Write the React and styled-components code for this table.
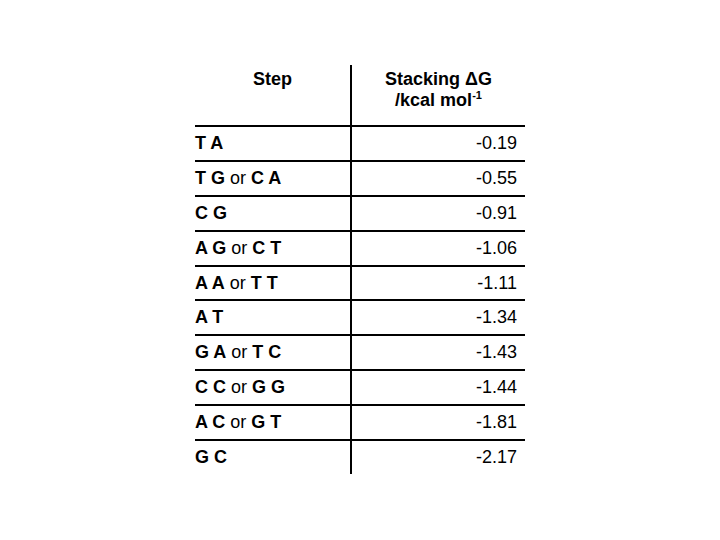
import React from 'react';
import styled, { createGlobalStyle } from 'styled-components';

const GlobalStyle = createGlobalStyle`
    html, body {
        margin: 0;
        padding: 0;
        background: #ffffff;
    }
    body {
        font-family: "Liberation Sans", Arial, sans-serif;
        color: #000000;
    }
`;

const Page = styled.div`
    width: 720px;
    height: 540px;
    padding: 65px 0 0 195px;
    box-sizing: border-box;
`;

const Table = styled.div`
    width: 330px;
    display: flex;
    flex-direction: column;
`;

const Row = styled.div`
    display: grid;
    grid-template-columns: 157px 1fr;
    height: ${(p) => p.$height}px;
    box-sizing: border-box;
    border-top: ${(p) => (p.$ruled ? '2px solid #000' : 'none')};
`;

const StepCell = styled.div`
    border-right: 2px solid #000;
    display: flex;
    align-items: ${(p) => (p.$head ? 'flex-start' : 'center')};
    justify-content: ${(p) => (p.$head ? 'center' : 'flex-start')};
    padding: ${(p) => (p.$head ? '4px 0 0 0' : '0')};
    font-size: 18px;
    line-height: 21px;
    font-weight: ${(p) => (p.$head ? 700 : 400)};
`;

const ValueCell = styled.div`
    display: flex;
    flex-direction: column;
    align-items: ${(p) => (p.$head ? 'center' : 'flex-end')};
    justify-content: ${(p) => (p.$head ? 'flex-start' : 'center')};
    padding: ${(p) => (p.$head ? '4px 0 0 0' : '0 8px 0 0')};
    font-size: 18px;
    line-height: 21px;
    font-weight: ${(p) => (p.$head ? 700 : 400)};
`;

const Base = styled.b`
    font-weight: 700;
`;

const Sup = styled.sup`
    font-size: 11px;
    line-height: 0;
    vertical-align: 7px;
`;

const steps = [
    [['T A'], '-0.19'],
    [['T G', 'C A'], '-0.55'],
    [['C G'], '-0.91'],
    [['A G', 'C T'], '-1.06'],
    [['A A', 'T T'], '-1.11'],
    [['A T'], '-1.34'],
    [['G A', 'T C'], '-1.43'],
    [['C C', 'G G'], '-1.44'],
    [['A C', 'G T'], '-1.81'],
    [['G C'], '-2.17'],
];

const App = () => {
    return (
        <Page>
            <GlobalStyle />
            <Table>
                <Row $height={60}>
                    <StepCell $head>Step</StepCell>
                    <ValueCell $head>
                        <span>Stacking ΔG</span>
                        <span>/kcal mol<Sup>-1</Sup></span>
                    </ValueCell>
                </Row>
                {steps.map(([pair, value], i) => (
                    <Row key={i} $ruled $height={34.9}>
                        <StepCell>
                            <Base>{pair[0]}</Base>
                            {pair[1] && (
                                <>
                                    &nbsp;or&nbsp;<Base>{pair[1]}</Base>
                                </>
                            )}
                        </StepCell>
                        <ValueCell>{value}</ValueCell>
                    </Row>
                ))}
            </Table>
        </Page>
    );
};

export default App;
